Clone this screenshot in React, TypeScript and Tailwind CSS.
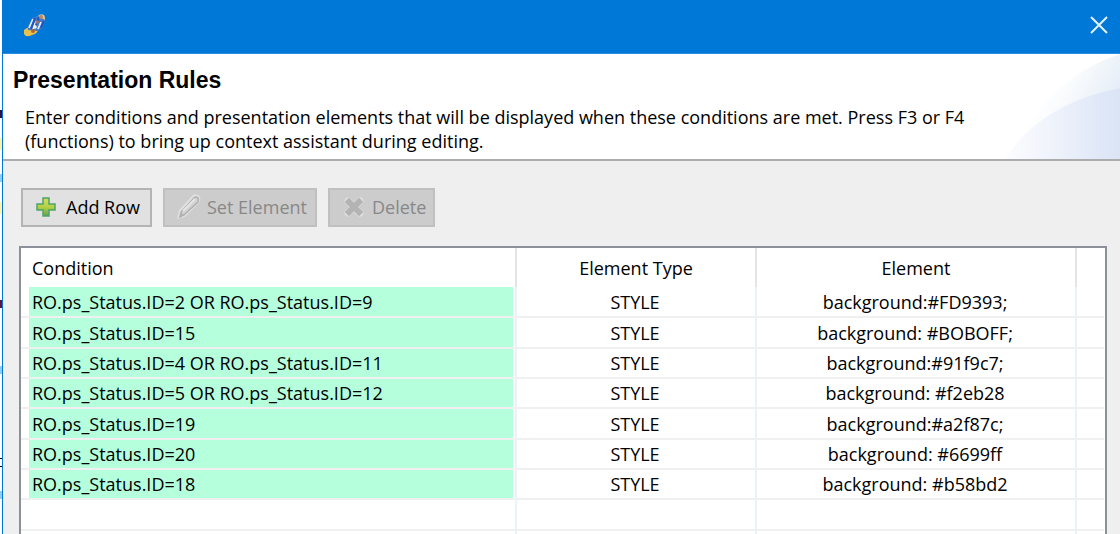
import { useState } from "react";

const ROWS = [
  { condition: "RO.ps_Status.ID=2 OR RO.ps_Status.ID=9", type: "STYLE", element: "background:#FD9393;" },
  { condition: "RO.ps_Status.ID=15", type: "STYLE", element: "background: #BOBOFF;" },
  { condition: "RO.ps_Status.ID=4 OR RO.ps_Status.ID=11", type: "STYLE", element: "background:#91f9c7;" },
  { condition: "RO.ps_Status.ID=5 OR RO.ps_Status.ID=12", type: "STYLE", element: "background: #f2eb28" },
  { condition: "RO.ps_Status.ID=19", type: "STYLE", element: "background:#a2f87c;" },
  { condition: "RO.ps_Status.ID=20", type: "STYLE", element: "background: #6699ff" },
  { condition: "RO.ps_Status.ID=18", type: "STYLE", element: "background: #b58bd2" },
];

const EMPTY = { condition: "", type: "", element: "" };

function AppIcon() {
  return (
    <svg width="24" height="24" viewBox="0 0 24 24" aria-hidden="true">
      <path d="M1 17 Q4 14 8 15 L15 17 Q14 21 9 22 Q3 25 1 21 Z" fill="#e8c04c" />
      <path d="M14 4 Q17 0 21 2 Q23 5 21 10 L15 8 Z" fill="#e6c48c" />
      <path d="M5 13 L9 5 L15 3 L22 7 L20 15 L14 18 L5 17 Z" fill="#3f78cc" />
      <path d="M6 15 L10 6 M10 16 L13 8 M15 16 L18 9" stroke="#e4ecf8" strokeWidth="1.800" fill="none" />
      <path d="M8 16 L12 5 M13 12 L16 4 M18 15 L21 8" stroke="#1c55bd" strokeWidth="2" fill="none" />
      <circle cx="14" cy="9" r="1.800" fill="#a97862" />
      <circle cx="12" cy="14" r="1.800" fill="#f1f1f1" />
      <circle cx="10" cy="18" r="2" fill="#b5662d" />
      <circle cx="18" cy="4" r="2" fill="#b98b63" />
    </svg>
  );
}

function PlusIcon() {
  return (
    <svg width="20" height="20" viewBox="0 0 20 20" aria-hidden="true">
      <defs>
        <linearGradient id="plus" x1="0" y1="0" x2="0" y2="1">
          <stop offset="0" stopColor="#d4dc62" />
          <stop offset="0.5" stopColor="#b4d244" />
          <stop offset="1" stopColor="#62a04e" />
        </linearGradient>
      </defs>
      <path d="M7 1 H13 V7 H19 V13 H13 V19 H7 V13 H1 V7 H7 Z" fill="url(#plus)" stroke="#4fa46a" strokeWidth="1.500" />
    </svg>
  );
}

function PencilIcon() {
  return (
    <svg width="24" height="26" viewBox="0 0 24 26" aria-hidden="true">
      <path d="M0 25 L2 16 L16 1 Q21 -1 23 3 Q24 6 22 9 L8 23 Z" fill="#e0e0e0" />
      <path d="M3 23 L4 18 L17 4 Q19 2 21 4 Q22 6 21 8 L7 21 Z" fill="#d2d2d2" stroke="#b0b0b0" strokeWidth="1.500" />
      <path d="M6 17 L18 5" stroke="#e6e6e6" strokeWidth="2" />
      <path d="M2 24 L4 19 L7 21 Z" fill="#b0b0b0" />
    </svg>
  );
}

function DeleteIcon() {
  return (
    <svg width="20" height="20" viewBox="0 0 20 20" aria-hidden="true">
      <path d="M4 4 L16 16 M16 4 L4 16" stroke="#dedede" strokeWidth="7" strokeLinecap="round" />
      <path d="M5 5 L15 15 M15 5 L5 15" stroke="#b3b3b3" strokeWidth="6" strokeLinecap="square" />
    </svg>
  );
}

function HeaderArt() {
  return (
    <svg className="absolute top-0 right-0 h-full w-[120px]" viewBox="0 0 120 105" preserveAspectRatio="none" aria-hidden="true">
      <defs>
        <linearGradient id="upper" x1="0.4" y1="0.2" x2="1" y2="0.5">
          <stop offset="0" stopColor="#fff" />
          <stop offset="0.3" stopColor="#f9fbfd" />
          <stop offset="1" stopColor="#e2ebf7" />
        </linearGradient>
        <linearGradient id="lower" x1="0" y1="0" x2="1" y2="0">
          <stop offset="0" stopColor="#fdfdff" />
          <stop offset="1" stopColor="#dae4f6" />
        </linearGradient>
      </defs>
      <path d="M25 75 Q60 20 120 0 V105 H5 Z" fill="url(#upper)" />
      <path d="M5 105 Q40 50 120 34 V105 Z" fill="url(#lower)" />
    </svg>
  );
}

export default function App() {
  const [rows, setRows] = useState(ROWS);

  return (
    <div className="flex h-screen overflow-hidden bg-[#efefef] font-['Open_Sans',sans-serif] text-lg text-black">
      {/* Sliver of the editor behind the dialog */}
      <div className="flex w-[2px] shrink-0 flex-col bg-white">
        <div className="mt-[110px] h-2 bg-[#30104a]" />
        <div className="mt-5 h-3 bg-[#fbf3ae]" />
        <div className="mt-6 h-2 bg-[#8fcdf5]" />
        <div className="mt-5 h-3 bg-[#fbf3ae]" />
        <div className="mt-[86px] h-2 bg-[#60104a]" />
        <div className="mt-[58px] h-2 bg-[#8fcdf5]" />
        <div className="mt-[84px] h-px bg-black" />
        <div className="mt-[7px] h-px bg-black" />
        <div className="mt-6 h-2 bg-[#8fcdf5]" />
      </div>

      <div className="flex min-w-0 flex-1 flex-col border-l border-[#0078d7]">
        {/* Title bar */}
        <div className="flex h-[54px] shrink-0 items-center justify-between border-b border-[#2c8de0] bg-[#0078d7] pr-3 pb-1 pl-5">
          <AppIcon />
          <button aria-label="Close" className="text-[#e6f2fc]">
            <svg width="18" height="18" viewBox="0 0 18 18" aria-hidden="true">
              <path d="M1 1 L17 17 M17 1 L1 17" stroke="currentColor" strokeWidth="2" />
            </svg>
          </button>
        </div>

        {/* Header */}
        <header className="relative h-[107px] shrink-0 border-b-2 border-[#acacac] bg-white pt-3 pl-[10px]">
          <HeaderArt />
          <h1 className="relative font-['Liberation_Sans',Arial,sans-serif] text-[23px] leading-7 font-bold">
            Presentation Rules
          </h1>
          <p className="relative mt-[11px] max-w-[980px] pl-3 leading-6">
            Enter conditions and presentation elements that will be displayed when these conditions are met. Press F3 or F4
            (functions) to bring up context assistant during editing.
          </p>
        </header>

        <div className="flex min-h-0 flex-1 flex-col pt-[27px] pr-[13px] pl-4">
          {/* Toolbar */}
          <div className="flex gap-[11px] pl-[2px]">
            <button
              onClick={() => setRows([...rows, EMPTY])}
              className="flex h-[39px] w-[131px] items-center gap-[10px] border-2 border-[#b4b4b4] bg-[#e1e1e1] pb-[2px] pl-[13px]"
            >
              <PlusIcon />
              Add Row
            </button>
            <button disabled className="flex h-[39px] w-[154px] items-center gap-[6px] border-2 border-[#c0c0c0] bg-[#cccccc] pb-[2px] pl-3 text-[#888]">
              <PencilIcon />
              Set Element
            </button>
            <button disabled className="flex h-[39px] w-[107px] items-center gap-2 border-2 border-[#c0c0c0] bg-[#cccccc] pb-[2px] pl-[14px] text-[#888]">
              <DeleteIcon />
              Delete
            </button>
          </div>

          {/* Rules table */}
          <div className="mt-[19px] min-h-0 flex-1 overflow-hidden border-2 border-b-0 border-[#8c9199] bg-white pr-px">
            <table className="w-full table-fixed border-collapse">
              <colgroup>
                <col className="w-[495px]" />
                <col className="w-[240px]" />
                <col className="w-[320px]" />
                <col />
              </colgroup>
              <thead>
                <tr className="h-[39px]">
                  <th className="border-r-2 border-[#e5e5e5] pl-[11px] text-left font-normal">Condition</th>
                  <th className="border-r-2 border-[#e5e5e5] font-normal">Element Type</th>
                  <th className="border-r-2 border-[#e5e5e5] font-normal">Element</th>
                  <td />
                </tr>
              </thead>
              <tbody>
                {[...rows, EMPTY, EMPTY].map((row, index) => (
                  <tr key={index} className="h-[30px] border-b-2 border-[#f0f0f0] leading-7 nth-[3n+2]:h-[31px]">
                    <td className="h-px border-r-2 border-r-[#ebf2fa] py-0 pr-[2px] pl-2">
                      {row.condition && (
                        <div className="flex h-full items-center bg-[#b5ffdd] pl-[3px] whitespace-nowrap">{row.condition}</div>
                      )}
                    </td>
                    <td className="border-r-2 border-r-[#ebf2fa] py-0 pr-[2px] pl-0 text-center">{row.type}</td>
                    <td className="border-r-2 border-r-[#ebf2fa] py-0 pr-[2px] pl-0 text-center">{row.element}</td>
                    <td />
                  </tr>
                ))}
              </tbody>
            </table>
          </div>
        </div>
      </div>
    </div>
  );
}
